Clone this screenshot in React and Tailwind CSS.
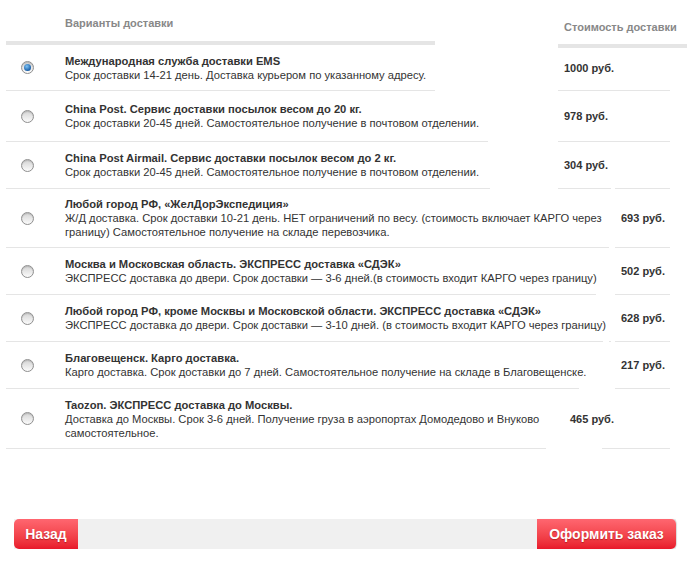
const rows = [
    {
        title: 'Международная служба доставки EMS',
        desc: ['Срок доставки 14-21 день. Доставка курьером по указанному адресу.'],
        price: '1000 руб.',
        checked: true,
        h: 'h-[46px]',
        left: 'w-[429px]',
        segs: [{ cls: 'ml-[123px] w-[112px] border-b', text: true }],
    },
    {
        title: 'China Post. Сервис доставки посылок весом до 20 кг.',
        desc: ['Срок доставки 20-45 дней. Самостоятельное получение в почтовом отделении.'],
        price: '978 руб.',
        h: 'h-[51px]',
        left: 'w-[482px]',
        segs: [{ cls: 'ml-[70px] w-[112px] border-b', text: true }],
    },
    {
        title: 'China Post Airmail. Сервис доставки посылок весом до 2 кг.',
        desc: ['Срок доставки 20-45 дней. Самостоятельное получение в почтовом отделении.'],
        price: '304 руб.',
        h: 'h-[47px]',
        left: 'w-[484px]',
        segs: [
            { cls: 'ml-[68px] w-[53px] border-b', text: true },
            { cls: 'ml-[4px] w-[55px] border-b' },
        ],
    },
    {
        title: 'Любой город РФ, «ЖелДорЭкспедиция»',
        desc: [
            'Ж/Д доставка. Срок доставки 10-21 день. НЕТ ограничений по весу. (стоимость включает КАРГО через',
            'границу) Самостоятельное получение на складе перевозчика.',
        ],
        price: '693 руб.',
        h: 'h-[59px]',
        left: 'w-[603px]',
        segs: [{ cls: 'ml-[6px] w-[55px] border-b', text: true }],
    },
    {
        title: 'Москва и Московская область. ЭКСПРЕСС доставка «СДЭК»',
        desc: ['ЭКСПРЕСС доставка до двери. Срок доставки — 3-6 дней.(в стоимость входит КАРГО через границу)'],
        price: '502 руб.',
        h: 'h-[47px]',
        left: 'w-[590px]',
        segs: [{ cls: 'ml-[19px] w-[55px] border-b', text: true }],
    },
    {
        title: 'Любой город РФ, кроме Москвы и Московской области. ЭКСПРЕСС доставка «СДЭК»',
        desc: ['ЭКСПРЕСС доставка до двери. Срок доставки — 3-10 дней. (в стоимость входит КАРГО через границу)'],
        price: '628 руб.',
        h: 'h-[47px]',
        left: 'w-[597px]',
        segs: [
            { cls: 'ml-[6px] w-[2px] border-b' },
            { cls: 'ml-[4px] w-[55px] border-b', text: true },
        ],
    },
    {
        title: 'Благовещенск. Карго доставка.',
        desc: ['Карго доставка. Срок доставки до 7 дней. Самостоятельное получение на складе в Благовещенске.'],
        price: '217 руб.',
        h: 'h-[47px]',
        left: 'w-[573px]',
        segs: [{ cls: 'ml-[36px] w-[55px] border-b', text: true }],
    },
    {
        title: 'Taozon. ЭКСПРЕСС доставка до Москвы.',
        desc: [
            'Доставка до Москвы. Срок 3-6 дней. Получение груза в аэропортах Домодедово и Внуково',
            'самостоятельное.',
        ],
        price: '465 руб.',
        h: 'h-[60px]',
        left: 'w-[540px]',
        segs: [
            { cls: 'ml-[18px] w-[38px]', text: true },
            { cls: 'w-[68px] border-b' },
        ],
    },
]

function Radio({ checked }) {
    return (
        <span className="flex h-[13px] w-[13px] shrink-0 items-center justify-center rounded-full border border-[#8f8f8f] bg-gradient-to-b from-[#d4d4d4] to-[#fbfbfb] shadow-[inset_0_1px_1px_rgba(0,0,0,0.15)]">
            {checked && (
                <span className="h-[7px] w-[7px] rounded-full bg-[radial-gradient(circle_at_40%_35%,#7fc4f5,#1a5fa8_70%,#0d3f7a)]" />
            )}
        </span>
    )
}

export default function App() {
    return (
        <div className="w-[695px] h-[570px] bg-white text-[11.2px] leading-[14px] text-[#333]" style={{ fontFamily: '"Liberation Sans", Arial, sans-serif' }}>
            <div className="pl-[6px]">
                <div className="flex items-start">
                    <div className="h-[45px] w-[429px] shrink-0 border-b-4 border-[#e5e5e5] pl-[59px] pt-[16px] text-[11px] font-bold text-[#888]">
                        Варианты доставки
                    </div>
                    <div className="ml-[123px] mt-[3px] -mb-[3px] h-[45px] w-[129px] shrink-0 border-b-4 border-[#e5e5e5] pl-[6px] pt-[17px] text-[11px] font-bold text-[#888] whitespace-nowrap">
                        Стоимость доставки
                    </div>
                </div>

                {rows.map((row) => (
                    <div key={row.title} className={`flex ${row.h}`}>
                        <div className={`flex shrink-0 items-center border-b border-[#e5e5e5] pl-[15px] ${row.left}`}>
                            <Radio checked={row.checked} />
                            <div className="ml-[31px] whitespace-nowrap">
                                <div className="font-bold">{row.title}</div>
                                {row.desc.map((line) => (
                                    <div key={line}>{line}</div>
                                ))}
                            </div>
                        </div>
                        {row.segs.map((seg, i) => (
                            <div key={i} className={`flex shrink-0 items-center border-[#e5e5e5] ${seg.cls}`}>
                                {seg.text && <span className="whitespace-nowrap pl-[6px] text-[11px] font-bold">{row.price}</span>}
                            </div>
                        ))}
                    </div>
                ))}
            </div>

            <div className="mx-[14px] mt-[70px] flex h-[30px] w-[662px] justify-between bg-[#f0f0f0]">
                <button className="h-full w-[64px] rounded-l-[5px] bg-gradient-to-b from-[#ff6670] to-[#e8172a] text-[14px] font-bold text-white [text-shadow:0_1px_1px_rgba(120,0,0,0.45)]">
                    Назад
                </button>
                <button className="h-full w-[139px] rounded-r-[5px] bg-gradient-to-b from-[#ff6670] to-[#e8172a] text-[14px] font-bold text-white shadow-[1px_0_1px_rgba(0,0,0,0.15)] [text-shadow:0_1px_1px_rgba(120,0,0,0.45)]">
                    Оформить заказ
                </button>
            </div>
        </div>
    )
}
